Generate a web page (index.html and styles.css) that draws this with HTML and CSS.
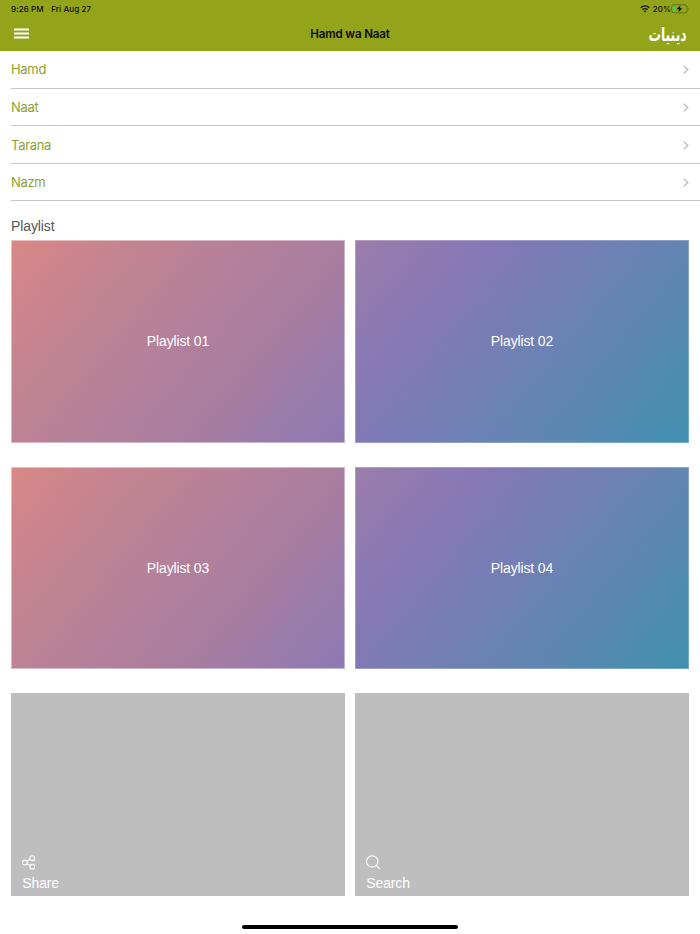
FILE: index.html
```html
<!DOCTYPE html>
<html lang="en">
<head>
<meta charset="utf-8">
<title>Hamd wa Naat</title>
<link rel="stylesheet" href="styles.css">
</head>
<body>
<header class="header">
  <div class="status">
    <span class="time">9:26 PM</span><span class="date">Fri Aug 27</span>
    <svg class="wifi" width="10" height="8" viewBox="0 0 10 8"><path d="M.6 2.8Q5-1 9.4 2.8M2.3 4.7Q5 2.5 7.7 4.7" fill="none" stroke="#17190a" stroke-width="1.3"/><path d="M3.6 6Q5 4.9 6.4 6L5 7.5Z" fill="#17190a"/></svg>
    <span class="percent">20%</span>
    <svg class="battery" width="18" height="10" viewBox="0 0 18 10"><rect x=".6" y=".8" width="15.5" height="8" rx="2.3" fill="none" stroke="#5b661c" stroke-width=".8"/><path d="M3 2h1.6v5.6H3Q1.8 7.6 1.8 6.3V3.3Q1.8 2 3 2Z" fill="#35d35b"/><path d="M9.4 1.6 5.5 5.3h2.4L7.3 8.2l4-3.9H8.9Z" fill="#090b03"/><path d="M17 3.6q1 1.2 0 2.4Z" fill="#5b661c"/></svg>
  </div>
  <div class="navbar">
    <svg class="menu" width="15" height="12" viewBox="0 0 15 12"><path d="M0 1.4h15M0 5.5h15M0 9.6h15" stroke="#fff" stroke-width="2"/></svg>
    <h1 class="title">Hamd wa Naat</h1>
    <span class="logo" lang="ar">دينيات</span>
  </div>
</header>
<main>
  <nav class="list">
    <a class="row">Hamd<svg class="chevron" width="6" height="9" viewBox="0 0 6 9"><path d="M.8.7 4.8 4.5.8 8.3"/></svg></a>
    <a class="row">Naat<svg class="chevron" width="6" height="9" viewBox="0 0 6 9"><path d="M.8.7 4.8 4.5.8 8.3"/></svg></a>
    <a class="row">Tarana<svg class="chevron" width="6" height="9" viewBox="0 0 6 9"><path d="M.8.7 4.8 4.5.8 8.3"/></svg></a>
    <a class="row">Nazm<svg class="chevron" width="6" height="9" viewBox="0 0 6 9"><path d="M.8.7 4.8 4.5.8 8.3"/></svg></a>
  </nav>
  <h2 class="section">Playlist</h2>
  <div class="grid">
    <div class="card rose"><span>Playlist 01</span></div>
    <div class="card blue"><span>Playlist 02</span></div>
    <div class="card rose"><span>Playlist 03</span></div>
    <div class="card blue"><span>Playlist 04</span></div>
    <div class="card action">
      <svg class="icon" width="15" height="15" viewBox="0 0 15 15"><circle cx="2.9" cy="7.5" r="2.4"/><circle cx="10.3" cy="3.2" r="2.4"/><circle cx="10.3" cy="11.7" r="2.4"/><path d="m5 6.3 3.2-1.9M5 8.7l3.2 1.8"/></svg>
      <span>Share</span>
    </div>
    <div class="card action">
      <svg class="icon" width="15" height="15" viewBox="0 0 15 15"><circle cx="6.2" cy="6.4" r="5.7"/><path d="m10.2 10.4 3.7 3.8"/></svg>
      <span>Search</span>
    </div>
  </div>
</main>
<div class="home"></div>
</body>
</html>
```
FILE: styles.css
```css
* { box-sizing: border-box; }
body { margin: 0; height: 934px; display: flex; flex-direction: column; overflow: hidden; background: #fff; font-family: "Liberation Sans", Arial, sans-serif; }
svg { display: block; flex: none; }
.header { height: 51px; background: #93a31a; color: #0b0d02; font-family: Inter, sans-serif; }
.status { height: 17px; display: flex; align-items: center; padding: 0 11px; font-size: 8px; font-weight: 500; letter-spacing: .1px; }
.date { margin-left: 7.5px; }
.wifi { margin-left: auto; }
.percent { margin: 0 0 0 3px; }
.navbar { height: 34px; display: grid; grid-template-columns: 1fr auto 1fr; align-items: center; padding: 0 13px 0 14px; }
.title { margin: 0 1px 0 0; font-size: 11.6px; font-weight: 600; line-height: 16px; letter-spacing: -.15px; }
.logo { justify-self: end; font-family: "DejaVu Sans", sans-serif; font-size: 19px; line-height: 28px; font-weight: 700; color: #fff; transform: scaleX(.65); transform-origin: right center; }
.list { display: flex; flex-direction: column; }
.row { height: 37.6px; margin-left: 11px; padding: 1.2px 11.5px 0 0; display: flex; align-items: center; justify-content: space-between; border-bottom: 1px solid #c6c6c6; color: #8fa033; font-family: Inter, sans-serif; font-size: 13px; line-height: 17px; letter-spacing: -.3px; }
.chevron { fill: none; stroke: #bebebe; stroke-width: 1.4; }
.section { margin: 17px 0 5.6px 11px; font-size: 14px; font-weight: 400; line-height: 16px; letter-spacing: -.1px; color: #555; }
.grid { display: grid; grid-template-columns: 334px 334px; grid-auto-rows: 202.8px; gap: 23.8px 10px; margin-left: 11px; }
.card { display: flex; align-items: center; justify-content: center; color: #fff; font-size: 14px; line-height: 16px; letter-spacing: -.14px; }
.rose { border: 1px solid #ffffff70; background: linear-gradient(130deg, #d98886 0%, #c58490 22%, #a67da2 70%, #8c7ab3 100%) border-box; }
.blue { border: 1px solid #ffffff40; background: linear-gradient(130deg, #9b7daa 0%, #8578b7 28%, #5d87b2 72%, #438fb0 97%) border-box; }
.action { flex-direction: column; align-items: flex-start; justify-content: flex-end; padding: 0 11px 5px 11.3px; gap: 5px; background: #bebebe; }
.icon { fill: none; stroke: #fff; stroke-width: 1.1; }
.home { width: 216px; height: 4px; margin: auto auto 5px; border-radius: 2px; background: #000; }
```
